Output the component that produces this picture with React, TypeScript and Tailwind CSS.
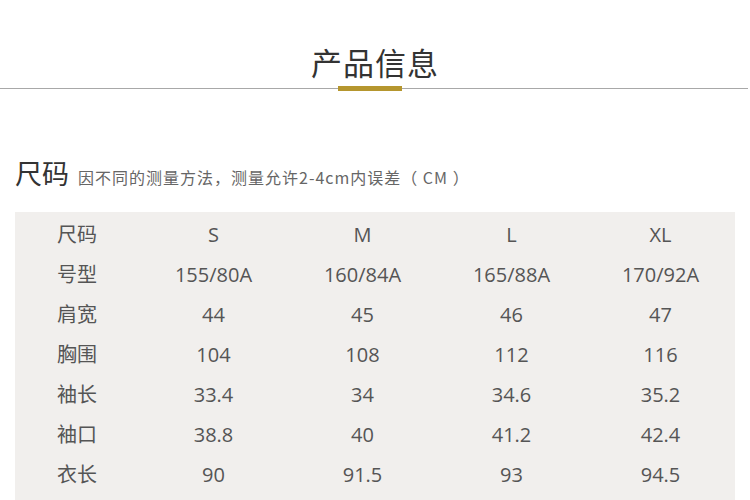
const rows: string[][] = [
  ["尺码", "S", "M", "L", "XL"],
  ["号型", "155/80A", "160/84A", "165/88A", "170/92A"],
  ["肩宽", "44", "45", "46", "47"],
  ["胸围", "104", "108", "112", "116"],
  ["袖长", "33.4", "34", "34.6", "35.2"],
  ["袖口", "38.8", "40", "41.2", "42.4"],
  ["衣长", "90", "91.5", "93", "94.5"],
];

export default function App() {
  return (
    <div
      className="w-[750px] h-[500px] overflow-hidden bg-white"
      style={{ fontFamily: '"Open Sans", "Noto Sans CJK SC", sans-serif' }}
    >
      <div className="pt-[42px] flex flex-col items-center">
        <div className="text-[31px] leading-[42px] text-[#333] tracking-[1px]">产品信息</div>
      </div>
      <div className="relative w-[748px] h-[2px] mt-[4px]">
        <div className="absolute left-0 right-0 top-0 h-px bg-[#a8a8a8]" />
        <div className="absolute left-[338px] w-[64px] top-[-2px] h-[5px] bg-[#b5962e]" />
      </div>
      <div className="mt-[68px] pl-[15px] flex items-baseline gap-[9px]">
        <span className="text-[27px] leading-[32px] text-[#333]">尺码</span>
        <span
          className="text-[16px] text-[#666] tracking-[1px]"
          style={{ fontFamily: '"Noto Sans CJK SC", sans-serif' }}
        >
          因不同的测量方法，测量允许2-4cm内误差（ CM ）
        </span>
      </div>
      <div className="mt-[22px] ml-[15px] w-[720px] bg-[#f1efed] pt-[3px] pb-[10px]">
        {rows.map((r, i) => (
          <div key={i} className="flex h-[40px] items-center text-[20px] text-[#555]">
            <div className="w-[124px] text-center">{r[0]}</div>
            {r.slice(1).map((c, j) => (
              <div key={j} className="w-[149px] text-center">{c}</div>
            ))}
          </div>
        ))}
      </div>
    </div>
  );
}
